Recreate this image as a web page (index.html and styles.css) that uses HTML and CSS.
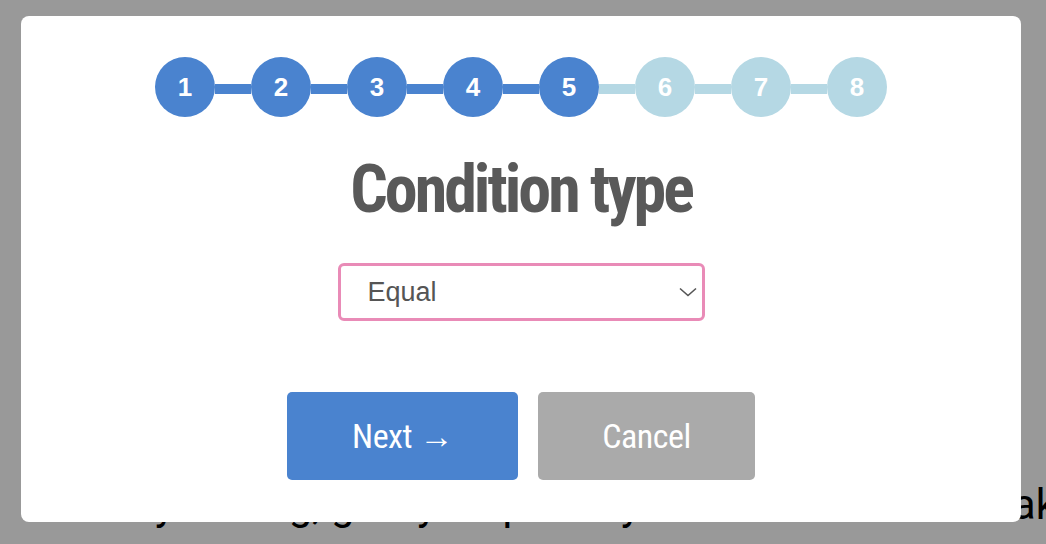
FILE: index.html
```html
<!DOCTYPE html>
<html>
<head>
<title>Condition type</title>
<meta charset="utf-8">
<link rel="stylesheet" href="styles.css">
</head>
<body>
	<div class="page">
		<p class="intro">Try the big, goofy ship to my finest and trusted oak</p>
	</div>

	<div class="overlay">
		<div class="modal">
			<div class="steps">
				<span class="step done">1</span><span class="link done"></span>
				<span class="step done">2</span><span class="link done"></span>
				<span class="step done">3</span><span class="link done"></span>
				<span class="step done">4</span><span class="link done"></span>
				<span class="step done">5</span><span class="link"></span>
				<span class="step">6</span><span class="link"></span>
				<span class="step">7</span><span class="link"></span>
				<span class="step">8</span>
			</div>
			<h1 class="title">Condition type</h1>
			<div class="select-wrap">
				<select class="select">
					<option>Equal</option>
					<option>Not equal</option>
					<option>Greater than</option>
					<option>Less than</option>
				</select>
				<svg class="chevron" width="18" height="10" viewBox="0 0 18 10"><polyline points="1,1.5 9,8.5 17,1.5" fill="none" stroke="#555" stroke-width="1.6"/></svg>
			</div>
			<div class="actions">
				<button class="btn btn-next">Next &rarr;</button>
				<button class="btn btn-cancel">Cancel</button>
			</div>
		</div>
	</div>
</body>
</html>
```

FILE: styles.css
```css
body {
	margin: 0;
	background-color: white;
	font-family: "Roboto Condensed", "Liberation Sans Narrow", Roboto, sans-serif;
	overflow: hidden;
}
.page {
	padding-top: 481px;
	padding-left: 117px;
	overflow: hidden;
}
.intro {
	margin: 0;
	font-family: Roboto, sans-serif;
	font-size: 42px;
	line-height: 48px;
	color: black;
	white-space: nowrap;
}
.overlay {
	position: fixed;
	top: 0;
	left: 0;
	right: 0;
	bottom: 0;
	background-color: rgba(0, 0, 0, 0.4);
	padding: 16px 0 0 21px;
}
.modal {
	width: 1000px;
	background-color: white;
	border-radius: 8px;
	padding: 41px 0 42px;
	display: flex;
	flex-direction: column;
	align-items: center;
}
.steps {
	display: flex;
	align-items: flex-start;
}
.step {
	width: 60px;
	height: 60px;
	border-radius: 50%;
	background-color: #b5d8e4;
	color: white;
	font-family: "Liberation Sans", Arial, sans-serif;
	font-weight: bold;
	font-size: 26px;
	line-height: 60px;
	text-align: center;
}
.link {
	width: 36px;
	height: 10px;
	margin-top: 27px;
	background-color: #b5d8e4;
}
.step.done, .link.done {
	background-color: #4a83cf;
}
.title {
	margin: 34px 0 0;
	font-size: 66px;
	line-height: 77px;
	font-weight: bold;
	letter-spacing: -3px;
	color: #595959;
}
.select-wrap {
	position: relative;
	margin-top: 35px;
}
.select {
	appearance: none;
	-webkit-appearance: none;
	width: 367px;
	height: 58px;
	border: 3px solid #e98bb7;
	border-radius: 6px;
	background-color: white;
	padding: 0 0 0 27px;
	font-family: "Liberation Sans", Arial, sans-serif;
	font-size: 27px;
	color: #555;
	outline: none;
}
.chevron {
	position: absolute;
	right: 8px;
	top: 24px;
}
.actions {
	display: flex;
	gap: 20px;
	margin-top: 71px;
}
.btn {
	height: 88px;
	border: none;
	border-radius: 5px;
	color: white;
	font-family: "Roboto Condensed", "Liberation Sans Narrow", Roboto, sans-serif;
	font-size: 34px;
	letter-spacing: -0.5px;
	cursor: pointer;
}
.btn-next {
	width: 231px;
	background-color: #4a83cf;
}
.btn-cancel {
	width: 217px;
	background-color: #aaaaaa;
}
```
